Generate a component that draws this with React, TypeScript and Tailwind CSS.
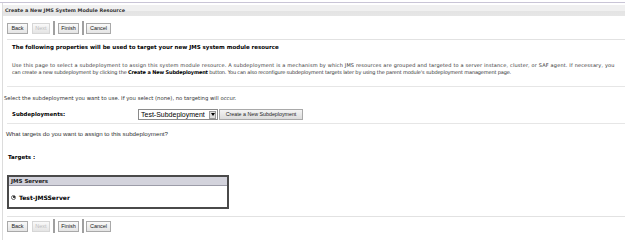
const btn =
  "h-[11px] px-[2px] border border-[#a9a9a9] bg-[linear-gradient(#fafafa,#e4e4e4)] text-[5.5px] leading-[9px] font-['Liberation_Sans'] text-[#222]";

function ButtonBar() {
  return (
    <div className="flex items-center h-[14px] ml-[4px]">
      <button className={btn + " w-[21px]"}>Back</button>
      <button className={btn + " w-[18px] ml-[4px] text-[#bdbdbd] border-[#d6d6d6]"}>Next</button>
      <span className="w-[2px] h-[14px] bg-[#a0a0a0] ml-[3px]" />
      <button className={btn + " w-[21px] ml-[3px]"}>Finish</button>
      <span className="w-[2px] h-[14px] bg-[#a0a0a0] ml-[3px]" />
      <button className={btn + " w-[25px] ml-[2px]"}>Cancel</button>
    </div>
  );
}

export default function App() {
  return (
    <div className="w-[627px] h-[240px] bg-white overflow-hidden pt-[2px] pr-[2px] font-['DejaVu_Sans'] text-[#222]">
      <div className="h-full border-t border-[#c9c5d6]">
        <div className="h-full ml-[2px] border-l border-[#dcdcdc] pt-[2px]">
          <div className="h-[11px] bg-[linear-gradient(#f0f0f0_0%,#f0f0f0_55%,#e4e4e4_55%,#e6e6e6_100%)] pl-[2px] text-[4.9px] leading-[10px] font-bold text-[#333]">
            Create a New JMS System Module Resource
          </div>

          <div className="mt-[5px]">
            <ButtonBar />
          </div>

          <div className="mt-[4px] ml-[4px] border-t border-[#e2e2e2]" />

          <p className="mt-[3px] ml-[9px] text-[5.5px] leading-[8px] font-bold text-black">
            The following properties will be used to target your new JMS system module resource
          </p>

          <p className="mt-[11px] ml-[9px] text-[5px] leading-[7px] text-[#333] whitespace-nowrap">
            <span className="tracking-[0.16px]">
              Use this page to select a subdeployment to assign this system module resource. A subdeployment is a mechanism by which JMS resources are grouped and targeted to a server instance, cluster, or SAF agent. If necessary, you
            </span>
            <br />
            <span className="tracking-[-0.15px]">
              can create a new subdeployment by clicking the <b className="text-black">Create a New Subdeployment</b> button. You can also reconfigure subdeployment targets later by using the parent module's subdeployment management page.
            </span>
          </p>

          <div className="mt-[10px] ml-[4px] border-t border-[#e6e6e6]" />

          <p className="mt-[8px] ml-[1px] text-[5.3px] leading-[7px] text-[#333]">
            Select the subdeployment you want to use. If you select (none), no targeting will occur.
          </p>

          <div className="mt-[7px] flex items-center h-[11px]">
            <span className="ml-[9px] w-[126px] text-[5.4px] font-bold text-black">Subdeployments:</span>
            <div className="flex items-center h-[11px] w-[80px] border border-[#8a8a8a] bg-white">
              <span className="flex-1 pl-[2px] text-[7px] leading-[9px] font-['Liberation_Sans'] text-black">
                Test-Subdeployment
              </span>
              <span className="w-[7px] h-[8px] mr-[1px] bg-[#dcdcdc] border border-[#9a9a9a] flex items-center justify-center">
                <span className="border-l-[2px] border-r-[2px] border-t-[3px] border-l-transparent border-r-transparent border-t-black" />
              </span>
            </div>
            <button className="ml-[1px] h-[11px] w-[84px] border border-[#a9a9a9] bg-[linear-gradient(#f4f4f4,#dcdcdc)] text-[5.3px] leading-[9px] font-['Liberation_Sans'] text-[#222]">
              Create a New Subdeployment
            </button>
          </div>

          <div className="mt-[3px] ml-[4px] border-t border-[#e6e6e6]" />

          <p className="mt-[6px] ml-[3px] text-[6.2px] leading-[7px] font-['Liberation_Sans'] text-[#333]">
            What targets do you want to assign to this subdeployment?
          </p>

          <p className="mt-[16px] ml-[5px] text-[5.5px] leading-[8px] font-bold text-black">Targets :</p>

          <div className="mt-[14px] ml-[4px] w-[222px] border-2 border-[#4a4a4a] bg-white">
            <div className="h-[9px] bg-[#d3d3dc] border-b border-[#9c9ca8] pl-[2px] text-[5.5px] leading-[9px] font-bold text-[#222]">
              JMS Servers
            </div>
            <div className="h-[21px] flex items-center pl-[2px] border-t border-[#fff]">
              <span className="w-[5px] h-[5px] rounded-full border border-[#666] flex items-center justify-center">
                <span className="w-[2px] h-[2px] rounded-full bg-black" />
              </span>
              <span className="ml-[3px] text-[6px] font-bold text-black">Test-JMSServer</span>
            </div>
          </div>

          <div className="mt-[7px] ml-[4px] border-t border-[#e2e2e2]" />

          <div className="mt-[2px]">
            <ButtonBar />
          </div>
        </div>
      </div>
    </div>
  );
}
